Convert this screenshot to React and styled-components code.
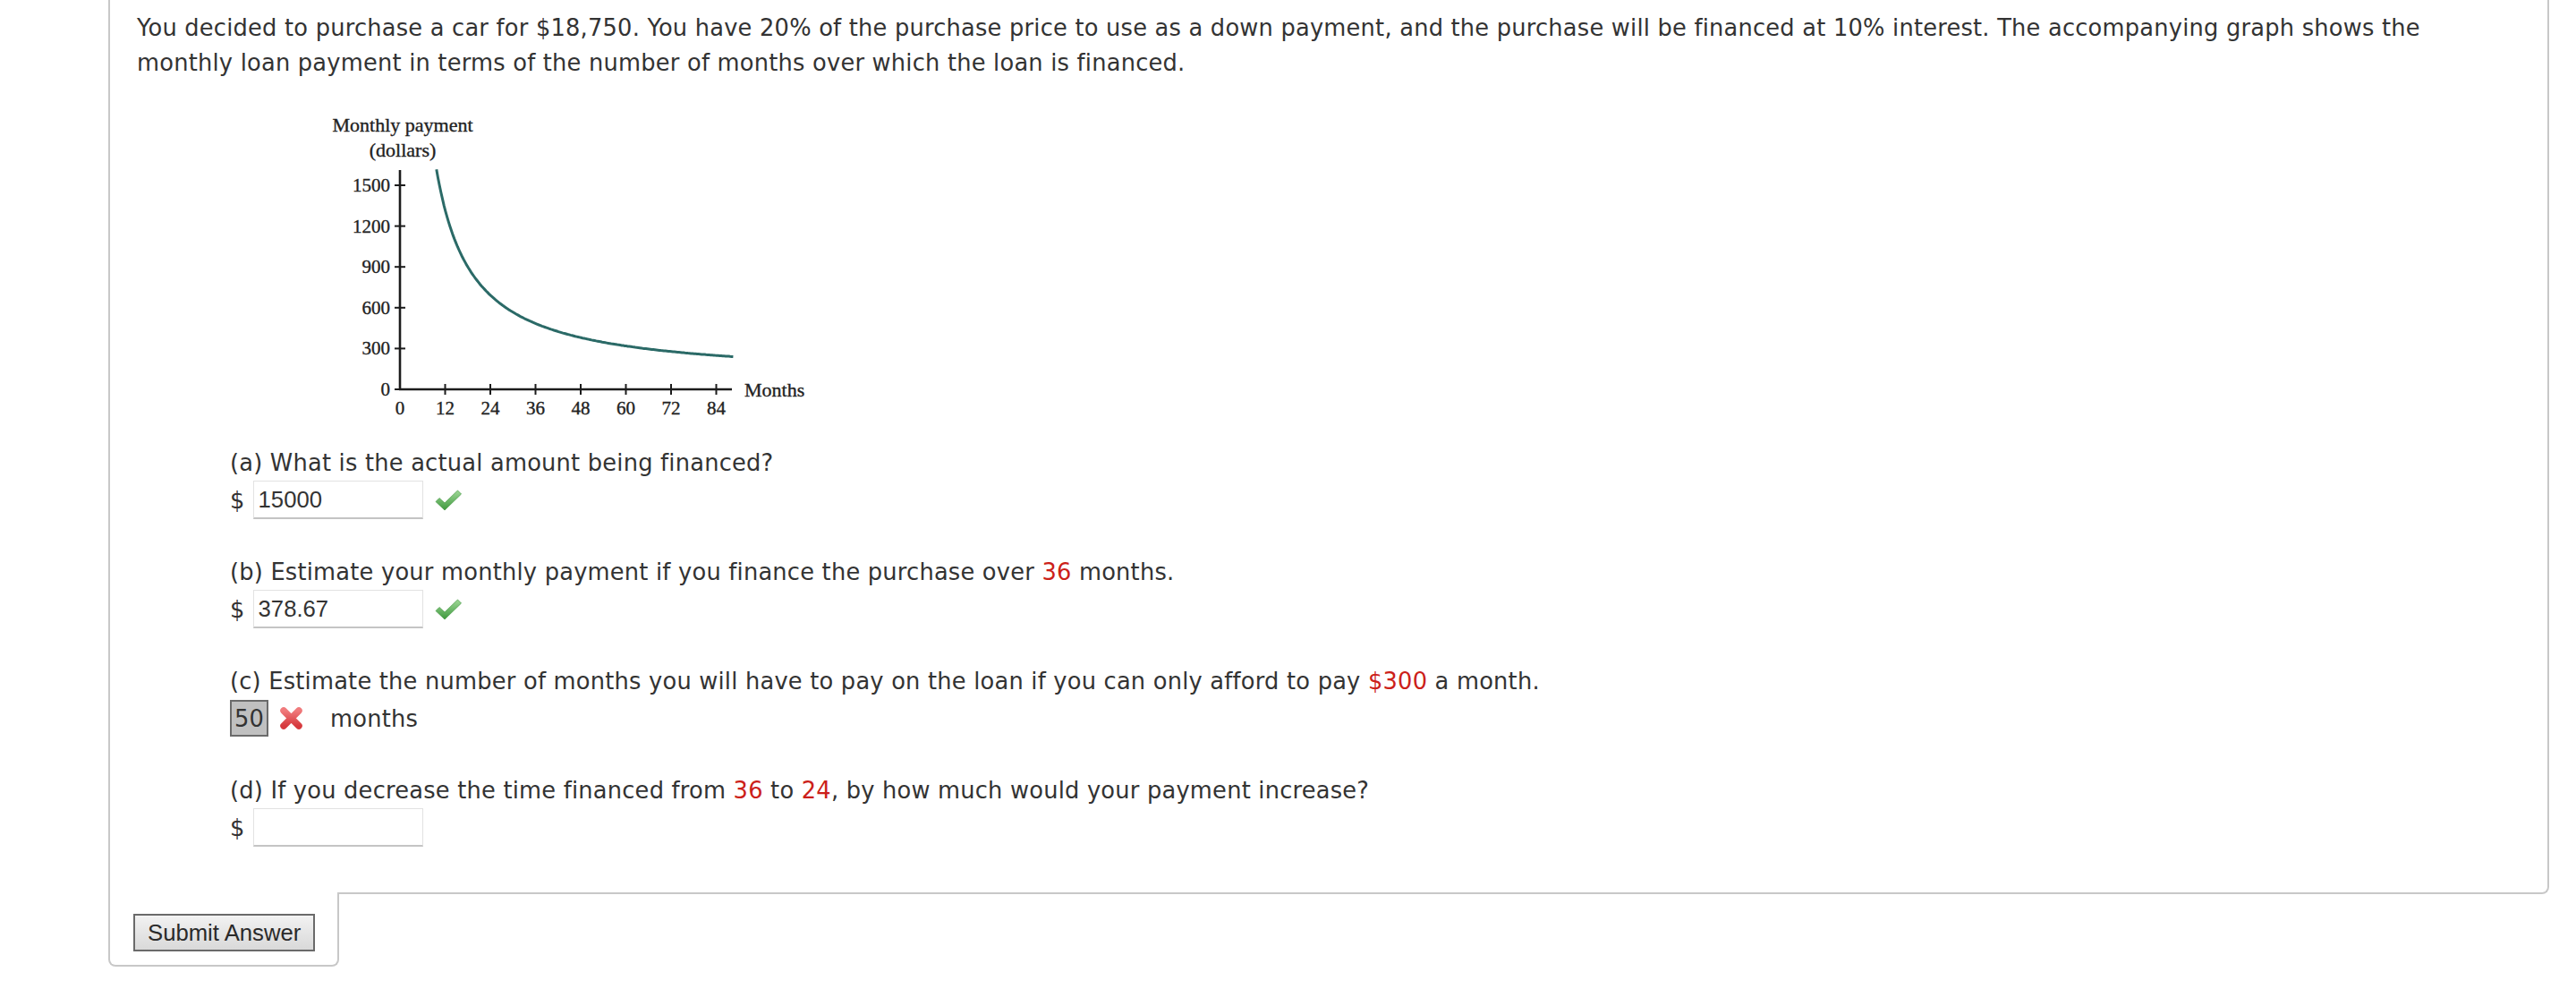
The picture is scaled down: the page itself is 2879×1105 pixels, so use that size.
import React from "react";
import styled, { createGlobalStyle } from "styled-components";

const GlobalStyle = createGlobalStyle`
  body {
    margin: 0;
    background: #fff;
    font-family: "DejaVu Sans", Verdana, sans-serif;
    font-size: 25.7px;
    letter-spacing: 0.22px;
    color: #333;
  }
`;

const Page = styled.div`
  padding: 0 30px 0 121px;
`;

const Panel = styled.div`
  box-sizing: border-box;
  border: 2px solid #c8c8c8;
  border-top: none;
  border-radius: 0 0 8px 0;
  padding: 12px 30px 51px 30px;
`;

const Intro = styled.p`
  margin: 0;
  line-height: 39px;
`;

const Graph = styled.svg`
  display: block;
  margin: 20px 0 0 197px;
  font-family: "Liberation Serif", "Times New Roman", serif;
  letter-spacing: 0;
`;

const Parts = styled.div`
  display: flex;
  flex-direction: column;
  gap: 40px;
  margin: 18px 0 0 104px;
`;

const Part = styled.div``;

const Question = styled.div`
  line-height: 39px;
`;

const Hl = styled.span`
  color: #cc1f1a;
`;

const Row = styled.div`
  display: flex;
  align-items: center;
  height: 43px;
`;

const Dollar = styled.span`
  margin-right: 9px;
`;

const Input = styled.input`
  box-sizing: border-box;
  width: 190px;
  height: 43px;
  padding: 0 5px;
  border: 1px solid #e2e2e2;
  border-bottom: 2px solid #c4c4c4;
  font-family: "Liberation Sans", Arial, sans-serif;
  font-size: 25.7px;
  color: #333;
  background: #fff;
  outline: none;
`;

const Mark = styled.svg`
  margin-left: ${(p) => p.gap || 13}px;
  flex-shrink: 0;
`;

const Wrong = styled.span`
  box-sizing: border-box;
  display: inline-flex;
  align-items: center;
  justify-content: center;
  width: 43px;
  height: 41px;
  background: #c0c0c0;
  border: 2px solid #6b6b6b;
`;

const Unit = styled.span`
  margin-left: 30px;
`;

const Tab = styled.div`
  position: relative;
  box-sizing: border-box;
  width: 258px;
  margin-top: -2px;
  padding: 24px 0 15px 26px;
  background: #fff;
  border: 2px solid #c8c8c8;
  border-top: none;
  border-radius: 0 0 8px 8px;
`;

const Submit = styled.button`
  box-sizing: border-box;
  height: 42px;
  padding: 0 14px;
  border: 2px solid #6a6a6a;
  background: linear-gradient(#f2f2f2, #d9d9d9);
  font-family: "Liberation Sans", Arial, sans-serif;
  font-size: 25.7px;
  color: #2a2a2a;
`;

// monthly payment on 15000 at 10%/yr
const pay = (n) => {
  const r = 0.1 / 12;
  return (15000 * r) / (1 - Math.pow(1 + r, -n));
};

const X0 = 97;
const Y0 = 325;
const sx = 50.5 / 12;
const sy = 45.6 / 300;

const curve = (() => {
  const pts = [];
  for (let n = 9.7; n <= 88.6; n += 0.4) {
    pts.push(`${(X0 + n * sx).toFixed(1)},${(Y0 - pay(n) * sy).toFixed(1)}`);
  }
  return "M" + pts.join(" L");
})();

const ink = { fill: "#222", stroke: "#222", strokeWidth: 0.35 };

const PaymentGraph = () => (
  <Graph width="570" height="370" viewBox="0 0 570 370">
    <text x="100" y="37" fontSize="22" textAnchor="middle" {...ink}>
      Monthly payment
    </text>
    <text x="100" y="65" fontSize="22" textAnchor="middle" {...ink}>
      (dollars)
    </text>
    <line x1={X0} y1="80" x2={X0} y2={Y0 + 1} stroke="#1c1c1c" strokeWidth="2.6" />
    <line x1={X0 - 1} y1={Y0} x2="468" y2={Y0} stroke="#1c1c1c" strokeWidth="2.6" />
    {[0, 300, 600, 900, 1200, 1500].map((v) => {
      const y = Y0 - v * sy;
      return (
        <g key={v}>
          <line x1={X0 - 6} y1={y} x2={X0 + 6} y2={y} stroke="#1c1c1c" strokeWidth="2" />
          <text x="86" y={y + 7} fontSize="21" textAnchor="end" {...ink}>
            {v}
          </text>
        </g>
      );
    })}
    {[0, 12, 24, 36, 48, 60, 72, 84].map((m) => {
      const x = X0 + m * sx;
      return (
        <g key={m}>
          {m > 0 && <line x1={x} y1={Y0 - 6} x2={x} y2={Y0 + 6} stroke="#1c1c1c" strokeWidth="2" />}
          <text x={x} y="353" fontSize="21" textAnchor="middle" {...ink}>
            {m}
          </text>
        </g>
      );
    })}
    <text x="482" y="333" fontSize="22" {...ink}>
      Months
    </text>
    <path d={curve} fill="none" stroke="#2b6a67" strokeWidth="3" />
  </Graph>
);

const Check = () => (
  <Mark width="30" height="24" viewBox="0 0 30 24">
    <defs>
      <linearGradient id="ok" x1="0" y1="0" x2="0" y2="1">
        <stop offset="0" stopColor="#9fd897" />
        <stop offset="1" stopColor="#3e983d" />
      </linearGradient>
    </defs>
    <path d="M1 13.5 L5 9.5 L11 15 L25.5 1 L29.5 5 L11 23 Z" fill="url(#ok)" stroke="#4f9e4c" strokeWidth="0.8" strokeLinejoin="round" />
  </Mark>
);

const Cross = () => (
  <Mark gap={12} width="27" height="27" viewBox="0 0 27 27">
    <defs>
      <linearGradient id="bad" x1="0" y1="0" x2="0" y2="1">
        <stop offset="0" stopColor="#f07a7c" />
        <stop offset="1" stopColor="#d6393d" />
      </linearGradient>
    </defs>
    <path d="M5 5 L22 22 M22 5 L5 22" stroke="url(#bad)" strokeWidth="7.5" strokeLinecap="round" />
  </Mark>
);

export default function App() {
  return (
    <Page>
      <GlobalStyle />
      <Panel>
        <Intro>
          You decided to purchase a car for $18,750. You have 20% of the purchase price to use as a down
          payment, and the purchase will be financed at 10% interest. The accompanying graph shows the
          monthly loan payment in terms of the number of months over which the loan is financed.
        </Intro>
        <PaymentGraph />
        <Parts>
          <Part>
            <Question>(a) What is the actual amount being financed?</Question>
            <Row>
              <Dollar>$</Dollar>
              <Input defaultValue="15000" />
              <Check />
            </Row>
          </Part>
          <Part>
            <Question>
              (b) Estimate your monthly payment if you finance the purchase over <Hl>36</Hl> months.
            </Question>
            <Row>
              <Dollar>$</Dollar>
              <Input defaultValue="378.67" />
              <Check />
            </Row>
          </Part>
          <Part>
            <Question>
              (c) Estimate the number of months you will have to pay on the loan if you can only afford to pay{" "}
              <Hl>$300</Hl> a month.
            </Question>
            <Row>
              <Wrong>50</Wrong>
              <Cross />
              <Unit>months</Unit>
            </Row>
          </Part>
          <Part>
            <Question>
              (d) If you decrease the time financed from <Hl>36</Hl> to <Hl>24</Hl>, by how much would your
              payment increase?
            </Question>
            <Row>
              <Dollar>$</Dollar>
              <Input defaultValue="" />
            </Row>
          </Part>
        </Parts>
      </Panel>
      <Tab>
        <Submit>Submit Answer</Submit>
      </Tab>
    </Page>
  );
}
